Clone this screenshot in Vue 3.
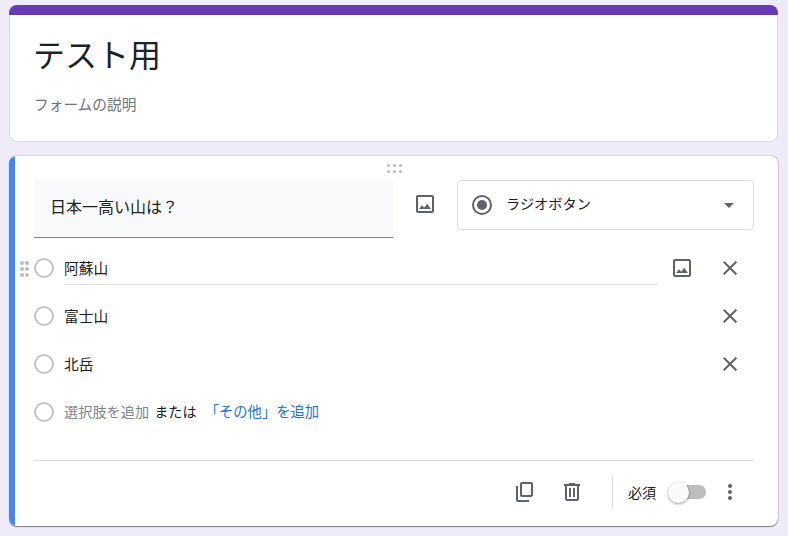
<script setup>
const d = {
  image: 'M19 5v14H5V5h14m0-2H5c-1.1 0-2 .9-2 2v14c0 1.1.9 2 2 2h14c1.1 0 2-.9 2-2V5c0-1.1-.9-2-2-2zm-4.86 8.86l-3 3.87L9 13.14 6 17h12l-3.86-5.14z',
  close: 'M19 6.41L17.59 5 12 10.59 6.41 5 5 6.41 10.59 12 5 17.59 6.41 19 12 13.41 17.59 19 19 17.59 13.41 12z',
  copy: 'M19 2H10C8.9 2 8 2.9 8 4v11c0 1.1.9 2 2 2h9c1.1 0 2-.9 2-2V4c0-1.1-.9-2-2-2zm0 13h-9V4h9v11zM6 6H4v14c0 1.1.9 2 2 2h11v-2H6V6z',
  trash: 'M15 4V3H9v1H4v2h1v13c0 1.1.9 2 2 2h10c1.1 0 2-.9 2-2V6h1V4h-5zm2 15H7V6h10v13zM9 8h2v9H9zm4 0h2v9h-2z',
  more: 'M12 8c1.1 0 2-.9 2-2s-.9-2-2-2-2 .9-2 2 .9 2 2 2zm0 2c-1.1 0-2 .9-2 2s.9 2 2 2 2-.9 2-2-.9-2-2-2zm0 6c-1.1 0-2 .9-2 2s.9 2 2 2 2-.9 2-2-.9-2-2-2z'
}
const options = [
  { label: '阿蘇山', active: true },
  { label: '富士山', active: false },
  { label: '北岳', active: false }
]
</script>

<template>
  <main class="page">
    <section class="card head-card">
      <div class="head-bar"></div>
      <div class="head-body">
        <h1 class="title">テスト用</h1>
        <p class="desc">フォームの説明</p>
      </div>
    </section>

    <section class="card q-card">
      <div class="q-accent"></div>
      <div class="grip grip-top">
        <i v-for="n in 6" :key="n"></i>
      </div>
      <div class="q-body">
        <div class="q-top">
          <div class="q-field">日本一高い山は？</div>
          <button class="icon-slot q-image">
            <svg viewBox="0 0 24 24"><path :d="d.image" /></svg>
          </button>
          <div class="type-select">
            <span class="type-radio"><span></span></span>
            <span class="type-label">ラジオボタン</span>
            <span class="caret"></span>
          </div>
        </div>

        <ul class="options">
          <li v-for="o in options" :key="o.label" class="opt">
            <div v-if="o.active" class="grip grip-side">
              <i v-for="n in 6" :key="n"></i>
            </div>
            <span class="radio"></span>
            <div class="opt-text" :class="{ underlined: o.active }">{{ o.label }}</div>
            <button class="icon-slot opt-image">
              <svg v-if="o.active" viewBox="0 0 24 24"><path :d="d.image" /></svg>
            </button>
            <button class="icon-slot">
              <svg viewBox="0 0 24 24"><path :d="d.close" /></svg>
            </button>
          </li>
          <li class="opt add-row">
            <span class="radio"></span>
            <span class="add-text">選択肢を追加</span>
            <span class="add-or">または</span>
            <a class="add-other">「その他」を追加</a>
          </li>
        </ul>

        <footer class="foot">
          <button class="icon-slot">
            <svg viewBox="0 0 24 24"><path :d="d.copy" /></svg>
          </button>
          <button class="icon-slot">
            <svg viewBox="0 0 24 24"><path :d="d.trash" /></svg>
          </button>
          <span class="foot-sep"></span>
          <span class="req">必須</span>
          <span class="toggle"><span class="thumb"></span></span>
          <button class="icon-slot">
            <svg viewBox="0 0 24 24"><path :d="d.more" /></svg>
          </button>
        </footer>
      </div>
    </section>
  </main>
</template>

<style>
html, body { margin: 0; background: #f0ebf8; }
</style>

<style scoped>
.page {
  width: 788px;
  height: 536px;
  box-sizing: border-box;
  padding: 5px 10px 0 9px;
  display: flex;
  flex-direction: column;
  gap: 13px;
  overflow: hidden;
  background: #f0ebf8;
  font-family: "Noto Sans CJK JP", "Noto Sans", sans-serif;
  color: #202124;
}
.card {
  width: 769px;
  box-sizing: border-box;
  background: #fff;
  border-radius: 8px;
  overflow: hidden;
}
.head-card {
  height: 137px;
  box-shadow: 0 0 0 1px #dadce0 inset;
}
.head-bar { height: 10px; background: #673ab7; }
.head-body { padding: 0 24px 0 25px; }
.title {
  margin: 0 0 0 -1px;
  padding-top: 17px;
  font-size: 32px;
  font-weight: 400;
  line-height: 42px;
}
.desc {
  margin: 0;
  padding-top: 19px;
  font-size: 14.7px;
  line-height: 22px;
  color: #70757a;
}

.q-card {
  position: relative;
  height: 371px;
  border-top: 1px solid #dadce0;
  box-shadow: 0 1px 1px rgba(60, 64, 67, .65), 1px 0 1px rgba(60, 64, 67, .15);
}
.q-accent {
  position: absolute;
  left: 0; top: 0; bottom: 0;
  width: 6px;
  background: #4285f4;
}
.q-body { padding: 24px 24px 0 25px; }
.q-top { display: flex; align-items: flex-start; }
.q-field {
  width: 359px;
  height: 58px;
  box-sizing: border-box;
  padding-left: 16px;
  background: #f8f9fa;
  border-bottom: 1px solid #80868b;
  font-size: 16px;
  line-height: 53px;
}
.icon-slot {
  width: 48px;
  height: 48px;
  padding: 0;
  border: 0;
  background: none;
  display: flex;
  align-items: center;
  justify-content: center;
  flex: none;
}
.icon-slot svg { width: 24px; height: 24px; fill: #5f6368; display: block; }
.q-image { margin: 0 8px; }
.type-select {
  width: 297px;
  height: 50px;
  box-sizing: border-box;
  border: 1px solid #dadce0;
  border-radius: 4px;
  display: flex;
  align-items: center;
  padding-left: 14px;
}
.type-radio {
  width: 20px;
  height: 20px;
  box-sizing: border-box;
  border: 2px solid #5f6368;
  border-radius: 50%;
  display: flex;
  align-items: center;
  justify-content: center;
}
.type-radio span { width: 10px; height: 10px; border-radius: 50%; background: #5f6368; }
.type-label { margin: -5px 0 0 14px; font-size: 14.2px; line-height: 20px; flex: 1; }
.caret {
  width: 0; height: 0;
  margin-right: 19px;
  border-left: 5px solid transparent;
  border-right: 5px solid transparent;
  border-top: 5px solid #5f6368;
}

.options { list-style: none; margin: 6px 0 0; padding: 0; }
.opt { position: relative; height: 48px; display: flex; align-items: center; }
.radio {
  width: 20px;
  height: 20px;
  box-sizing: border-box;
  border: 2px solid #c4c4c4;
  border-radius: 50%;
  flex: none;
}
.opt-text {
  width: 594px;
  height: 34px;
  box-sizing: border-box;
  margin-left: 10px;
  font-size: 14.7px;
  line-height: 33px;
}
.opt-text.underlined { border-bottom: 1px solid #e0e0e0; }
.grip { display: grid; }
.grip i { border-radius: 50%; background: #bdbdbd; }
.grip-side {
  position: absolute;
  left: -14px;
  top: 17px;
  grid-template-columns: 4px 4px;
  gap: 2px 1px;
}
.grip-side i { width: 4px; height: 4px; }
.grip-top {
  position: absolute;
  left: 378px;
  top: 8px;
  grid-template-columns: 3px 3px 3px;
  gap: 3px;
  z-index: 1;
}
.grip-top i { width: 3px; height: 3px; }
.add-row { font-size: 14.2px; padding-bottom: 3px; box-sizing: border-box; }
.add-row .radio { margin-top: 3px; }
.add-text { margin-left: 10px; color: #80868b; }
.add-or { margin-left: 5px; }
.add-other { margin-left: 8px; color: #1a73e8; font-size: 14.3px; }

.foot {
  margin-top: 24px;
  height: 62px;
  border-top: 1px solid #dadce0;
  display: flex;
  align-items: center;
  justify-content: flex-end;
}
.foot-sep { width: 1px; height: 32px; margin: 0 15px 0 16px; background: #dadce0; }
.req { font-size: 14px; width: 29px; }
.toggle {
  position: relative;
  width: 34px;
  height: 14px;
  margin-left: 15px;
  border-radius: 7px;
  background: #bdbdbd;
}
.thumb {
  position: absolute;
  left: -4px;
  top: -3px;
  width: 21px;
  height: 21px;
  border-radius: 50%;
  background: #fafafa;
  box-shadow: 0 1px 3px rgba(0, 0, 0, .4);
}
</style>
